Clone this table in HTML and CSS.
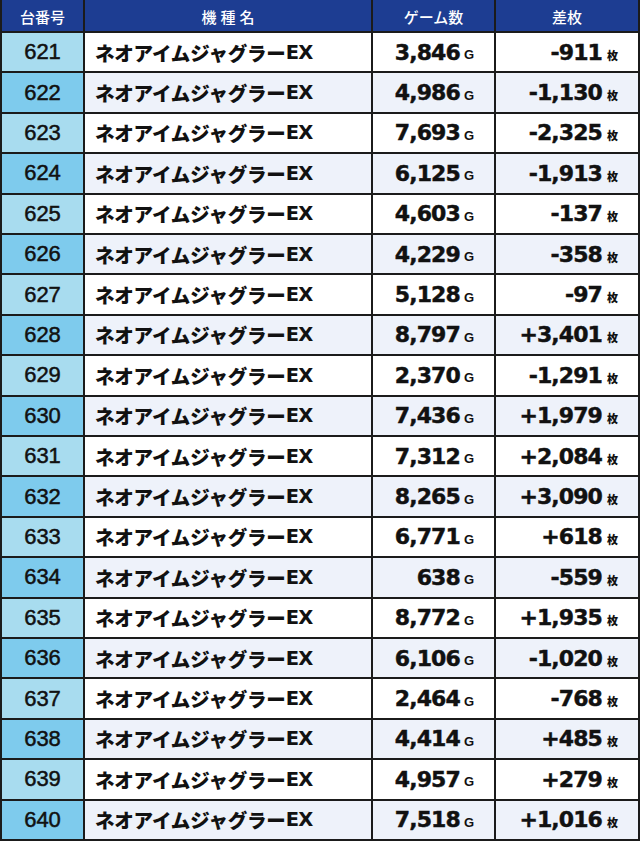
FILE: index.html
```html
<!DOCTYPE html>
<html lang="ja">
<head>
<meta charset="utf-8">
<link rel="stylesheet" href="styles.css">
</head>
<body>
<div class="table" id="t">
  <div class="h">台番号</div>
  <div class="h sp">機種名</div>
  <div class="h">ゲーム数</div>
  <div class="h">差枚</div>
</div>
<script src="app.js"></script>
</body>
</html>
```
FILE: styles.css
```css
html, body { margin: 0; padding: 0; background: #ffffff; }
.table {
  width: 640px;
  height: 841px;
  box-sizing: border-box;
  background: #1b1b1b;
  padding: 0 2px 2px 2px;
  display: grid;
  grid-template-columns: 81px 286px 121px 142px;
  grid-template-rows: 31px repeat(20, 1fr);
  gap: 2px;
}
.h {
  background: #1d3d92;
  color: #ffffff;
  font-family: "Noto Sans CJK JP", sans-serif;
  font-weight: 500;
  font-size: 15px;
  display: flex;
  align-items: center;
  justify-content: center;
  padding-top: 1px;
}
.sp { letter-spacing: 4px; padding-left: 4px; }
.no {
  background: #a8dcef;
  font-family: "Liberation Sans", Arial, sans-serif;
  font-size: 22px;
  color: #111;
  display: flex;
  align-items: center;
  justify-content: center;
  -webkit-text-stroke: 0.5px #111;
}
.no.alt { background: #7ecbed; }
.name, .num {
  background: #ffffff;
  display: flex;
  align-items: center;
  color: #111;
}
.alt2 { background: #eef2fa; }
.name {
  font-family: "Noto Sans CJK JP", sans-serif;
  font-weight: 900;
  font-size: 19.5px;
  padding-left: 10px;
  letter-spacing: -0.2px;
}
.name .ex { font-family: "DejaVu Sans", sans-serif; font-weight: 700; font-size: 19.5px; letter-spacing: -0.8px; }
.num {
  justify-content: flex-end;
  padding-right: 20px;
  font-family: "DejaVu Sans", sans-serif;
  font-weight: 700;
  font-size: 22px;
  letter-spacing: -0.9px;
  -webkit-text-stroke: 0.45px #111;
}
.u {
  font-family: "Liberation Sans", Arial, sans-serif;
  font-weight: 700;
  font-size: 13px;
  margin-left: 4px;
  margin-top: 5px;
  letter-spacing: 0;
  -webkit-text-stroke: 0;
}
.d .u { font-family: "Noto Sans CJK JP", sans-serif; font-weight: 900; font-size: 11px; margin-left: 5px; }
```
FILE: app.js
```js
const rows = [
  [621,"3,846","-911"],[622,"4,986","-1,130"],[623,"7,693","-2,325"],[624,"6,125","-1,913"],
  [625,"4,603","-137"],[626,"4,229","-358"],[627,"5,128","-97"],[628,"8,797","+3,401"],
  [629,"2,370","-1,291"],[630,"7,436","+1,979"],[631,"7,312","+2,084"],[632,"8,265","+3,090"],
  [633,"6,771","+618"],[634,"638","-559"],[635,"8,772","+1,935"],[636,"6,106","-1,020"],
  [637,"2,464","-768"],[638,"4,414","+485"],[639,"4,957","+279"],[640,"7,518","+1,016"]
];
const t = document.getElementById("t");
rows.forEach((r, i) => {
  const alt = i % 2 === 1;
  t.insertAdjacentHTML("beforeend",
    `<div class="no${alt ? " alt" : ""}">${r[0]}</div>` +
    `<div class="name${alt ? " alt2" : ""}">ネオアイムジャグラー<span class="ex">EX</span></div>` +
    `<div class="num g${alt ? " alt2" : ""}">${r[1]}<span class="u">G</span></div>` +
    `<div class="num d${alt ? " alt2" : ""}">${r[2]}<span class="u">枚</span></div>`);
});
```
